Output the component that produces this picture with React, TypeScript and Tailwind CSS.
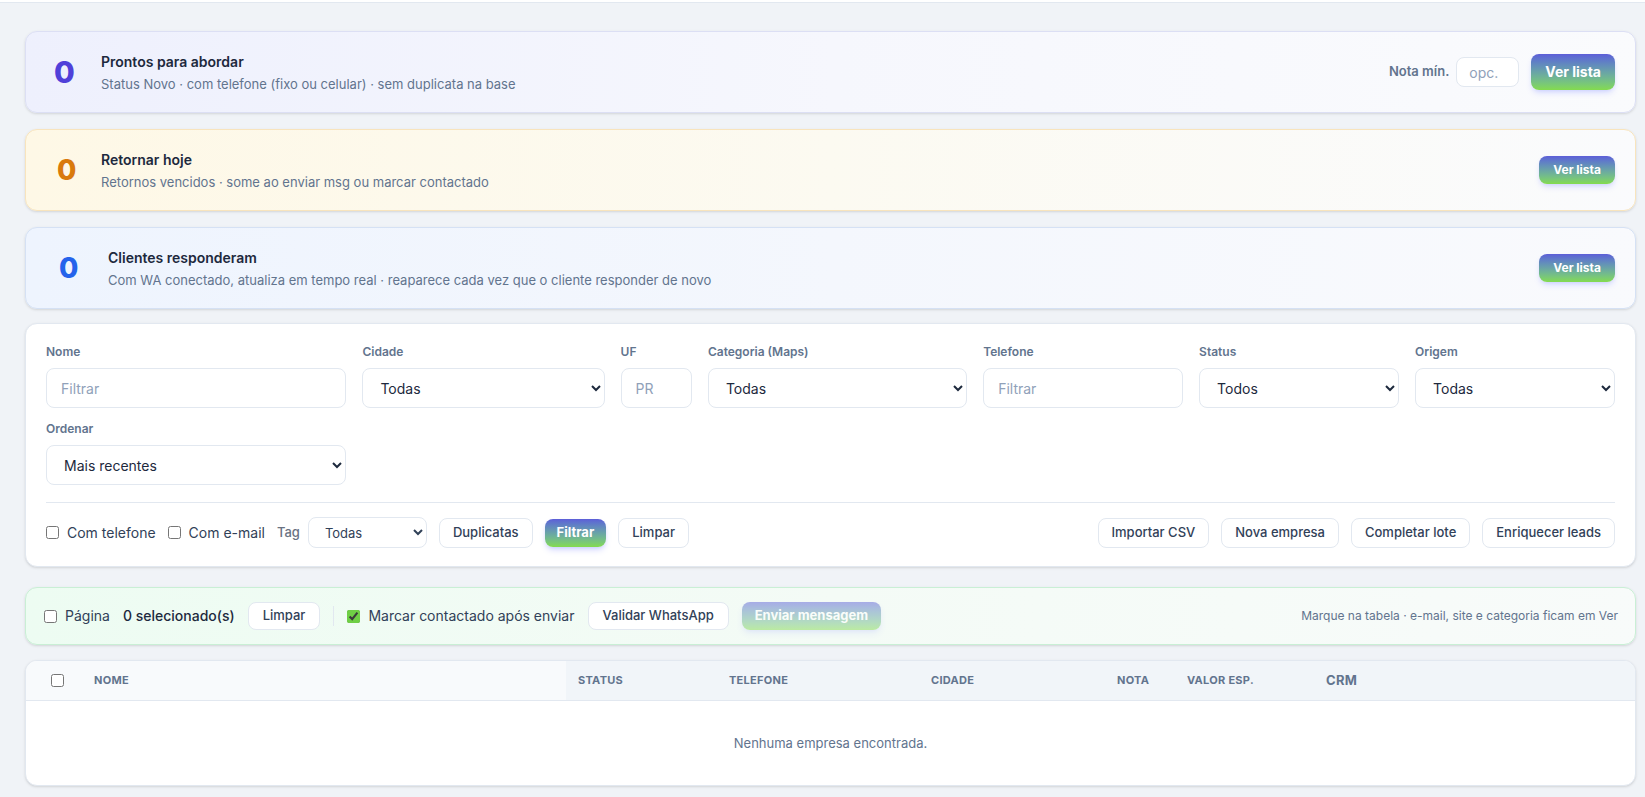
import { useState } from 'react';

interface StatCardProps {
  count: number;
  title: string;
  subtitle: string;
  tone: 'indigo' | 'amber' | 'blue';
  showNota?: boolean;
}

const toneStyles = {
  indigo: {
    card: 'border-[#dcdff4] bg-linear-to-r from-[#eef0fd] via-[#f6f7fd] to-[#fafbfd] pl-7',
    num: 'text-[#5040d9] w-[31px] text-3xl',
  },
  amber: {
    card: 'border-[#f8e4bd] bg-linear-to-r from-[#fef8e6] via-[#fcfaf1] to-[#fafbfd] pl-7',
    num: 'text-[#d97a0c] w-[28px] ml-[3px] text-[28px]',
  },
  blue: {
    card: 'border-[#d5e1f4] bg-linear-to-r from-[#eef4fe] via-[#f4f7fd] to-[#f9fafd] pl-8',
    num: 'text-[#2563eb] w-[33px] ml-px text-[28px]',
  },
};

function GradientButton({ children, size = 'sm', disabled }: { children: React.ReactNode; size?: 'sm' | 'md'; disabled?: boolean }) {
  const sizing = size === 'md' ? 'h-9 px-[14px] text-sm' : 'h-7 px-3.5 text-xs';
  return (
    <button
      disabled={disabled}
      className={`${sizing} rounded-lg bg-linear-to-b from-[#5d5ed8] to-[#84db4c] font-bold text-white shadow-md shadow-indigo-400/25 whitespace-nowrap ${disabled ? 'opacity-50' : ''}`}
    >
      {children}
    </button>
  );
}

function StatCard({ count, title, subtitle, tone, showNota }: StatCardProps) {
  const styles = toneStyles[tone];
  return (
    <div className={`flex items-center rounded-xl border py-5 pr-5 shadow-sm ${styles.card}`}>
      <div className={`shrink-0 font-extrabold leading-none ${styles.num}`}>{count}</div>
      <div className="ml-4 min-w-0 flex-1">
        <div className="text-sm font-semibold leading-5 text-slate-800">{title}</div>
        <div className="mt-1 text-[13px] leading-4 text-slate-500">{subtitle}</div>
      </div>
      {showNota && (
        <div className="mr-3 flex items-center gap-[7px]">
          <span className="text-[13px] font-semibold text-slate-500">Nota mín.</span>
          <input
            placeholder="opc."
            className="h-[30px] w-[63px] rounded-lg border border-slate-200 bg-white px-3 text-sm text-slate-700 placeholder:text-slate-400 outline-none"
          />
        </div>
      )}
      <GradientButton size={showNota ? 'md' : 'sm'}>Ver lista</GradientButton>
    </div>
  );
}

function Field({ label, children, className = '' }: { label: string; children: React.ReactNode; className?: string }) {
  return (
    <div className={`flex flex-col ${className}`}>
      <label className="mb-2 text-xs font-semibold leading-4 text-slate-500">{label}</label>
      {children}
    </div>
  );
}

const inputCls =
  'h-10 w-full rounded-lg border border-slate-200 bg-white px-3.5 text-sm text-slate-800 placeholder:text-slate-400 outline-none';
const selectCls = 'h-10 w-full rounded-lg border border-slate-200 bg-white pl-[13px] pr-2 text-sm text-slate-800 outline-none';
const btnCls =
  'h-[30px] rounded-lg border border-slate-200 bg-white px-[13px] text-[13px] font-medium text-slate-700 whitespace-nowrap';
const smallBtnCls = 'h-7 rounded-lg border border-slate-200 bg-white px-3.5 text-[13px] font-medium text-slate-700 whitespace-nowrap';

export default function App() {
  const [marcar, setMarcar] = useState(true);

  return (
    <div className="min-h-screen bg-[#f0f3f7] font-['Inter',sans-serif] text-slate-800">
      <div className="h-[3px] border-b border-slate-200 bg-white" />

      <div className="pl-[25px] pr-[9px] pt-7 pb-3">
        <div className="flex flex-col gap-4">
          <StatCard
            tone="indigo"
            count={0}
            title="Prontos para abordar"
            subtitle="Status Novo · com telefone (fixo ou celular) · sem duplicata na base"
            showNota
          />
          <StatCard
            tone="amber"
            count={0}
            title="Retornar hoje"
            subtitle="Retornos vencidos · some ao enviar msg ou marcar contactado"
          />
          <StatCard
            tone="blue"
            count={0}
            title="Clientes responderam"
            subtitle="Com WA conectado, atualiza em tempo real · reaparece cada vez que o cliente responder de novo"
          />
        </div>

        {/* filtros */}
        <div className="mt-[14px] rounded-xl border border-slate-200 bg-white px-5 pt-5 pb-[18px] shadow-sm">
          <div className="grid grid-cols-[299fr_241fr_71fr_258fr_199fr_199fr_199fr] items-end gap-x-4 gap-y-[13px]">
            <Field label="Nome">
              <input placeholder="Filtrar" className={inputCls} />
            </Field>
            <Field label="Cidade">
              <select className={selectCls} defaultValue="Todas">
                <option>Todas</option>
              </select>
            </Field>
            <Field label="UF">
              <input placeholder="PR" className={inputCls} />
            </Field>
            <Field label="Categoria (Maps)">
              <select className={selectCls} defaultValue="Todas">
                <option>Todas</option>
              </select>
            </Field>
            <Field label="Telefone">
              <input placeholder="Filtrar" className={inputCls} />
            </Field>
            <Field label="Status">
              <select className={selectCls} defaultValue="Todos">
                <option>Todos</option>
              </select>
            </Field>
            <Field label="Origem">
              <select className={selectCls} defaultValue="Todas">
                <option>Todas</option>
              </select>
            </Field>
            <Field label="Ordenar">
              <select className={selectCls} defaultValue="Mais recentes">
                <option>Mais recentes</option>
              </select>
            </Field>
          </div>

          <div className="mt-[17px] flex items-center gap-3 border-t border-slate-200 pt-[14px]">
            <label className="flex items-center gap-2 text-sm text-slate-700">
              <input type="checkbox" className="h-[13px] w-[13px]" />
              Com telefone
            </label>
            <label className="flex items-center gap-2 text-sm text-slate-700">
              <input type="checkbox" className="h-[13px] w-[13px]" />
              Com e-mail
            </label>
            <div className="flex items-center gap-2">
              <span className="text-[13px] font-medium text-gray-500">Tag</span>
              <select className="h-[31px] w-[119px] rounded-lg border border-slate-200 bg-white pl-3 pr-2 text-[13px] text-slate-700 outline-none">
                <option>Todas</option>
              </select>
            </div>
            <button className={btnCls}>Duplicatas</button>
            <button className="h-7 rounded-lg bg-linear-to-b from-[#5d5ed8] to-[#84db4c] px-3 text-[13px] font-bold text-white shadow-md shadow-indigo-400/30">
              Filtrar
            </button>
            <button className={btnCls}>Limpar</button>

            <div className="ml-auto flex items-center gap-3">
              <button className={btnCls}>Importar CSV</button>
              <button className={btnCls}>Nova empresa</button>
              <button className={btnCls}>Completar lote</button>
              <button className={btnCls}>Enriquecer leads</button>
            </div>
          </div>
        </div>

        {/* barra de selecao */}
        <div className="mt-5 flex items-center gap-[13px] rounded-xl border border-[#c9efd5] bg-linear-to-r from-[#edfcf2] via-[#f4fbf6] to-[#f8fbfa] py-3.5 pl-[18px] pr-[17px] shadow-sm">
          <label className="flex items-center gap-2 text-sm text-slate-700">
            <input type="checkbox" className="h-[13px] w-[13px]" />
            Página
          </label>
          <span className="text-sm font-medium text-slate-800">0 selecionado(s)</span>
          <button className={smallBtnCls}>Limpar</button>
          <div className="h-5 w-px bg-slate-200" />
          <label className="flex items-center gap-2 text-sm text-slate-700">
            <input
              type="checkbox"
              checked={marcar}
              onChange={(e) => setMarcar(e.target.checked)}
              className="h-[13px] w-[13px] accent-[#6fcf45]"
            />
            Marcar contactado após enviar
          </label>
          <button className={smallBtnCls}>Validar WhatsApp</button>
          <button
            disabled
            className="h-7 rounded-lg bg-linear-to-b from-[#5d5ed8] to-[#84db4c] px-[13px] text-[13px] font-bold whitespace-nowrap text-white opacity-50 shadow-md shadow-indigo-400/25"
          >
            Enviar mensagem
          </button>
          <span className="ml-auto text-xs text-slate-500">Marque na tabela · e-mail, site e categoria ficam em Ver</span>
        </div>

        {/* tabela */}
        <div className="mt-[15px] overflow-hidden rounded-xl border border-slate-200 bg-white shadow-sm">
          <div className="grid h-10 grid-cols-[68px_472px_163px_202px_186px_70px_139px_1fr] border-b border-slate-200 text-[11px] font-bold uppercase tracking-wide text-slate-500">
            <div className="flex items-center bg-slate-50 pl-[25px]">
              <input type="checkbox" className="h-[13px] w-[13px]" />
            </div>
            <div className="flex items-center bg-slate-50">Nome</div>
            <div className="flex items-center bg-[#f1f5f9] pl-3">Status</div>
            <div className="flex items-center bg-[#f1f5f9]">Telefone</div>
            <div className="flex items-center bg-[#f1f5f9]">Cidade</div>
            <div className="flex items-center bg-[#f1f5f9]">Nota</div>
            <div className="flex items-center bg-[#f1f5f9]">Valor esp.</div>
            <div className="flex items-center bg-[#f1f5f9] text-[13px] normal-case">CRM</div>
          </div>
          <div className="py-8 text-center text-[13px] leading-5 text-slate-500">Nenhuma empresa encontrada.</div>
        </div>
      </div>
    </div>
  );
}
